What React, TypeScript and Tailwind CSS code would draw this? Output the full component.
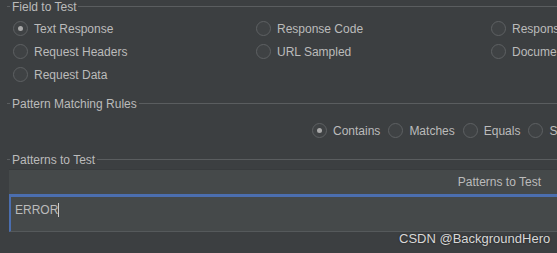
import React from "react";

const font = { fontFamily: '"Liberation Sans", Arial, sans-serif' };

function Title({ label }: { label: string }) {
  return (
    <div className="flex items-center h-[13px] text-[12px] text-[#bbbbbb] leading-none">
      <div className="ml-[7px] w-[3px] h-px bg-[#5a5d5f]" />
      <span className="px-[2px] whitespace-nowrap">{label}</span>
      <div className="flex-1 h-px bg-[#5a5d5f]" />
    </div>
  );
}

function Radio({ label, checked = false }: { label: string; checked?: boolean }) {
  return (
    <div className="flex items-center gap-[6px] whitespace-nowrap">
      <div className="w-[15px] h-[15px] rounded-full border border-[#5e6163] bg-[#3f4244] flex items-center justify-center shrink-0">
        {checked && <div className="w-[5px] h-[5px] rounded-full bg-[#a9a9a9]" />}
      </div>
      <span className="text-[12px] text-[#bbbbbb] leading-none">{label}</span>
    </div>
  );
}

export default function App() {
  return (
    <div className="relative w-[557px] h-[253px] bg-[#3c3f41] overflow-hidden" style={font}>
      <div>
        <Title label="Field to Test" />
        <div className="grid grid-cols-[243px_235px_200px] gap-y-[8px] pl-[13px] pt-[8px] w-[700px]">
          <Radio label="Text Response" checked />
          <Radio label="Response Code" />
          <Radio label="Response Message" />
          <Radio label="Request Headers" />
          <Radio label="URL Sampled" />
          <Radio label="Document (text)" />
          <Radio label="Request Data" />
        </div>
      </div>

      <div className="mt-[15px]">
        <Title label="Pattern Matching Rules" />
        <div className="flex pl-[312px] pt-[13px] pb-[1px] gap-[8px] w-[700px]">
          <Radio label="Contains" checked />
          <Radio label="Matches" />
          <Radio label="Equals" />
          <Radio label="Substring" />
        </div>
      </div>

      <div className="mt-[14px]">
        <Title label="Patterns to Test" />
        <div className="ml-[9px] mt-[3px]">
          <div className="h-[25px] bg-[#45494a] border-t border-[#383b3d] flex items-center justify-end pr-[16px] text-[12px] text-[#bbbbbb]">
            Patterns to Test
          </div>
          <div className="h-[3px] bg-[#4b6eaf]" />
          <div className="h-[35px] bg-[#45494a] border-l-2 border-[#4b6eaf] border-b border-b-[#55595b] flex items-start pt-[7px] pl-[4px]">
            <span className="text-[12px] text-[#bbbbbb] leading-none">ERROR</span>
            <span className="w-px h-[14px] bg-[#cccccc] -mt-[1px]" />
          </div>
        </div>
      </div>

      <div className="absolute left-[399px] top-[229px] text-[13px] text-[#d8d8d8] whitespace-nowrap [text-shadow:0_0_2px_#222]">
        CSDN @BackgroundHero
      </div>
    </div>
  );
}
